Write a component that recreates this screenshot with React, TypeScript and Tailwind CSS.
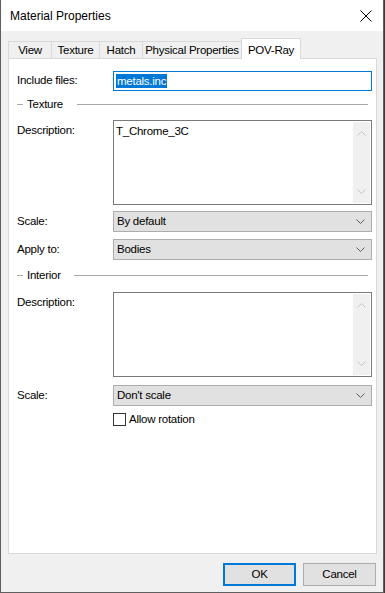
import React from "react";

function Chevron({ up = false, color = "#5a5a5a" }: { up?: boolean; color?: string }) {
  return (
    <svg width="9" height="6" viewBox="0 0 9 6" className="block">
      <path
        d={up ? "M0.5 5.5 L4.5 1.5 L8.5 5.5" : "M0.5 0.5 L4.5 4.5 L8.5 0.5"}
        fill="none"
        stroke={color}
        strokeWidth="1"
      />
    </svg>
  );
}

function TextArea({ text }: { text?: string }) {
  return (
    <div className="w-[259px] h-[85px] border border-[#7a7a7a] bg-white flex">
      <div className="flex-1 pl-[2px] pt-[3px] leading-[15px]">{text}</div>
      <div className="w-[17px] my-[1px] mr-[1px] bg-[#f0f0f0] flex flex-col items-center justify-between py-[8px]">
        <Chevron up color="#c4c4c4" />
        <Chevron color="#c4c4c4" />
      </div>
    </div>
  );
}

function Select({ value }: { value: string }) {
  return (
    <div className="w-[259px] h-[21px] border border-[#adadad] bg-[#e1e1e1] flex items-center pl-[3px] pr-[6px]">
      <div className="flex-1 leading-[15px]">{value}</div>
      <Chevron />
    </div>
  );
}

function GroupHeader({ title, gap }: { title: string; gap: string }) {
  return (
    <div className="flex items-center h-[15px] pr-[8px]">
      <div className="w-[6px] h-px bg-[#a8a8a8]" />
      <div className="ml-[4px] leading-[15px]">{title}</div>
      <div className={`${gap} flex-1 h-px bg-[#a8a8a8]`} />
    </div>
  );
}

export default function App() {
  return (
    <div className="w-[385px] h-[593px] bg-[#3b3b3b] font-['Liberation_Sans',Arial,sans-serif] text-[11.5px] tracking-[-0.25px] text-black">
      <div className="w-[384px] h-[593px] border-l border-r border-b border-[#5f5f5f] bg-[#f0f0f0] flex flex-col">
        {/* Title bar */}
        <div className="h-[31px] bg-white flex items-center pl-[9px] pr-[10px] shrink-0">
          <div className="flex-1 text-[12px] tracking-normal pt-[1px]">Material Properties</div>
          <svg width="12" height="12" viewBox="0 0 12 12" className="mr-[1px]">
            <path d="M0.5 0.5 L11.5 11.5 M11.5 0.5 L0.5 11.5" stroke="#000" strokeWidth="1" />
          </svg>
        </div>

        {/* Tabs */}
        <div className="flex items-end pl-[7px] mt-[7px] h-[20px] shrink-0 whitespace-nowrap">
          <div className="w-[43px] h-[17px] border-l border-t border-[#d9d9d9] flex items-center justify-center pt-[2px]">View</div>
          <div className="w-[48px] h-[17px] border-l border-t border-[#d9d9d9] flex items-center justify-center pt-[2px]">Texture</div>
          <div className="w-[43px] h-[17px] border-l border-t border-[#d9d9d9] flex items-center justify-center pt-[2px]">Hatch</div>
          <div className="w-[99px] h-[17px] border-l border-t border-[#d9d9d9] flex items-center justify-center pt-[2px]">Physical Properties</div>
          <div className="relative z-10 w-[60px] h-[21px] -mb-px border-l border-t border-r border-[#d9d9d9] bg-white flex items-start justify-center pt-[3px]">POV-Ray</div>
        </div>

        {/* Panel */}
        <div className="ml-[7px] w-[369px] h-[496px] border border-[#d9d9d9] bg-white shrink-0 flex flex-col pl-[8px] pt-[12px]">
          <div className="flex items-center h-[20px]">
            <div className="w-[96px]">Include files:</div>
            <div className="w-[259px] h-[20px] border border-[#0078d7] flex items-center pl-[2px]">
              <span className="bg-[#0078d7] text-white leading-[14px] px-px">metals.inc</span>
            </div>
          </div>

          <div className="mt-[6px]">
            <GroupHeader title="Texture" gap="ml-[14px]" />
          </div>

          <div className="flex items-start mt-[8px]">
            <div className="w-[96px] pt-[2px]">Description:</div>
            <TextArea text="T_Chrome_3C" />
          </div>

          <div className="flex items-center mt-[6px]">
            <div className="w-[96px]">Scale:</div>
            <Select value="By default" />
          </div>

          <div className="flex items-center mt-[7px]">
            <div className="w-[96px]">Apply to:</div>
            <Select value="Bodies" />
          </div>

          <div className="mt-[8px]">
            <GroupHeader title="Interior" gap="ml-[13px]" />
          </div>

          <div className="flex items-start mt-[9px]">
            <div className="w-[96px] pt-[2px]">Description:</div>
            <TextArea />
          </div>

          <div className="flex items-center mt-[8px]">
            <div className="w-[96px]">Scale:</div>
            <Select value="Don't scale" />
          </div>

          <div className="flex items-center mt-[6px] ml-[96px]">
            <div className="w-[13px] h-[13px] border border-[#333333] bg-white" />
            <div className="ml-[3px] leading-[15px]">Allow rotation</div>
          </div>
        </div>

        {/* Buttons */}
        <div className="flex justify-end gap-[7px] pr-[7px] mt-[9px]">
          <div className="w-[73px] h-[23px] border-2 border-[#0078d7] bg-[#e1e1e1] flex items-center justify-center">OK</div>
          <div className="w-[73px] h-[23px] border border-[#adadad] bg-[#e1e1e1] flex items-center justify-center">Cancel</div>
        </div>
      </div>
    </div>
  );
}
